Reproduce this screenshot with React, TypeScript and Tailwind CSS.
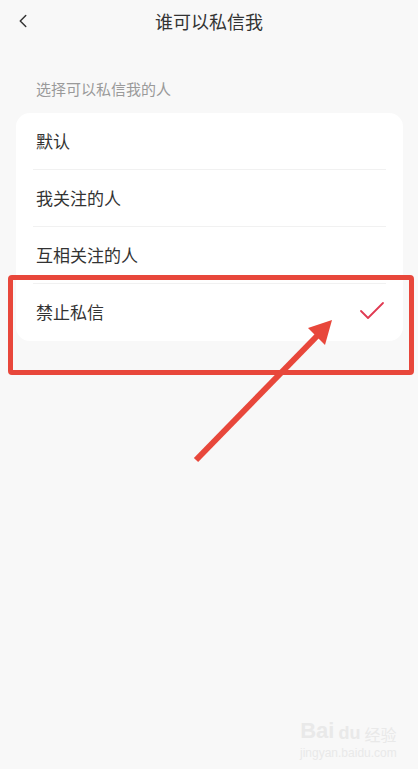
import { ChevronLeft } from "lucide-react";

const OPTIONS = ["默认", "我关注的人", "互相关注的人", "禁止私信"];

function App() {
  const selected = "禁止私信";

  return (
    <div
      className="relative w-[418px] h-[769px] overflow-hidden bg-[#f8f8f8] text-[#333]"
      style={{ fontFamily: '"Noto Sans CJK SC", "Noto Sans", sans-serif' }}
    >
      <div className="relative flex items-center justify-center h-[41px]">
        <ChevronLeft className="absolute left-[12px] top-[10px] w-[22px] h-[22px] text-[#333]" strokeWidth={1.6} />
        <span className="text-[18px] leading-none">谁可以私信我</span>
      </div>

      <div className="pl-[36px] pt-[38px] pb-[14px] text-[15px] leading-[20px] text-[#9a9a9a]">
        选择可以私信我的人
      </div>

      <div className="mx-[16px] w-[387px] rounded-[14px] bg-white">
        {OPTIONS.map((o, i) => (
          <div key={o} className="mx-[17px] h-[57px] flex items-center justify-between relative">
            <span className="pl-[3px] pb-[3px] text-[17px] leading-none text-[#333]">{o}</span>
            {o === selected && (
              <svg width="26" height="22" viewBox="0 0 26 22" className="mr-[1px] mb-[3px]">
                <path d="M2 11 L9 18 L24 3" fill="none" stroke="#e03a52" strokeWidth="1.8" strokeLinecap="round" strokeLinejoin="round" />
              </svg>
            )}
            {i < OPTIONS.length - 1 && (
              <div className="absolute left-0 right-0 bottom-0 h-px bg-[#f1f1f1]" />
            )}
          </div>
        ))}
      </div>

      {/* annotation box */}
      <div className="absolute left-[8px] top-[275px] w-[406px] h-[100px] border-[5px] border-[#e8473b] rounded-[4px]" />

      {/* annotation arrow */}
      <svg className="absolute left-0 top-0" width="418" height="769" viewBox="0 0 418 769">
        <line x1="196" y1="460" x2="318" y2="335" stroke="#e8473b" strokeWidth="6" />
        <polygon points="332,320 308,328 325,345" fill="#e8473b" />
      </svg>

      {/* watermark */}
      <div className="absolute left-[300px] top-[720px] flex flex-col items-center text-[#e9e9e9]">
        <div className="flex items-end leading-none">
          <span className="text-[22px] font-bold" style={{ fontFamily: '"Liberation Sans", sans-serif' }}>Bai</span>
          <span className="text-[18px] font-bold ml-[4px]" style={{ fontFamily: '"Liberation Sans", sans-serif' }}>du</span>
          <span className="text-[16px] ml-[4px]">经验</span>
        </div>
        <span className="text-[12px] leading-none mt-[5px]" style={{ fontFamily: '"Liberation Sans", sans-serif' }}>jingyan.baidu.com</span>
      </div>
    </div>
  );
}

export default App;
